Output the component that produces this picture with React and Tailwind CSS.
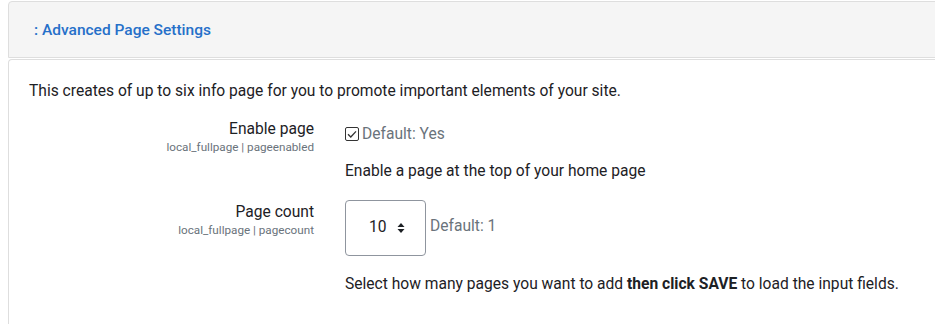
export default function App() {
  const font = { fontFamily: "Roboto, 'Noto Sans', sans-serif" };

  return (
    <div className="min-h-screen bg-white pl-[8px] pt-[1px] overflow-hidden" style={font}>
      <div className="w-[940px]">
        {/* header */}
        <div className="h-[57px] bg-[#f5f5f5] border border-[#dedede] rounded-tl-[4px] flex items-center pl-[25px]">
          <span className="text-[15.5px] font-medium text-[#2670c9] mt-[2px]">
            : Advanced Page Settings
          </span>
        </div>

        {/* body */}
        <div className="mt-[1px] border-l border-t border-[#dedede] rounded-tl-[4px] pl-[20px] pt-[20px] pb-[40px] text-[#1d2125] text-[15.6px]">
          <p className="leading-[22px]">
            This creates of up to six info page for you to promote important elements of your site.
          </p>

          {/* enable page */}
          <div className="flex mt-[16px]">
            <div className="w-[285px] text-right">
              <div className="leading-[22px]">Enable page</div>
              <div className="text-[11.7px] leading-[14px] text-[#6a737b]">
                local_fullpage | pageenabled
              </div>
            </div>
            <div className="ml-[31px]">
              <div className="flex items-center mt-[5px]">
                <svg width="14" height="14" viewBox="0 0 14 14" className="mr-[3px]">
                  <rect x="0.5" y="0.5" width="13" height="13" rx="1.5" fill="white" stroke="#333" />
                  <path d="M3 7.2 L5.8 10 L11 4.4" fill="none" stroke="#333" strokeWidth="1.3" />
                </svg>
                <span className="leading-[22px] text-[#6a737b]">Default: Yes</span>
              </div>
              <div className="leading-[22px] mt-[15px]">
                Enable a page at the top of your home page
              </div>
            </div>
          </div>

          {/* page count */}
          <div className="flex mt-[19px]">
            <div className="w-[285px] text-right">
              <div className="leading-[22px]">Page count</div>
              <div className="text-[11.7px] leading-[14px] text-[#6a737b]">
                local_fullpage | pagecount
              </div>
            </div>
            <div className="ml-[31px] mt-[-1px]">
              <div className="flex items-center">
                <div className="w-[81px] h-[56px] border border-[#8f959e] rounded-[4px] flex items-center pl-[23px]">
                  <span>10</span>
                  <svg width="8" height="12" viewBox="0 0 8 12" className="ml-[10px]">
                    <path d="M0.5 5 L4 1 L7.5 5 Z" fill="#1d2125" />
                    <path d="M0.5 7 L4 11 L7.5 7 Z" fill="#1d2125" />
                  </svg>
                </div>
                <span className="ml-[4px] text-[#6a737b] -mt-[2px]">Default: 1</span>
              </div>
              <div className="leading-[22px] mt-[17px]">
                Select how many pages you want to add <strong className="font-bold">then click SAVE</strong> to load the input fields.
              </div>
            </div>
          </div>
        </div>
      </div>
    </div>
  );
}
